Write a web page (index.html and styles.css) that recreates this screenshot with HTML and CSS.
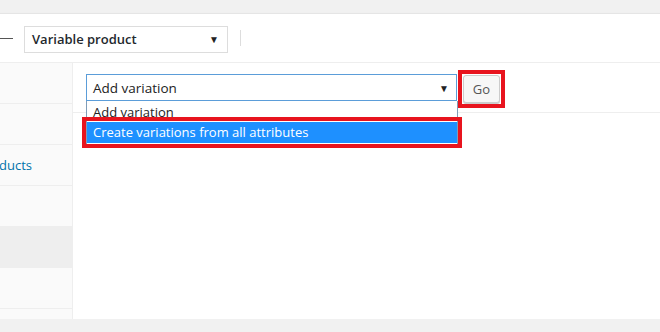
FILE: index.html
```html
<!DOCTYPE html>
<html lang="en">
<head>
  <meta charset="UTF-8" />
  <title>Product data</title>
  <link rel="stylesheet" href="styles.css">
</head>
<body>
  <div class="top-gap"></div>
  <div class="panel">
    <div class="panel-header">
      <span class="dash"></span>
      <div class="type-select">
        <span>Variable product</span>
        <span class="arrow">&#9660;</span>
      </div>
      <span class="sep"></span>
    </div>
    <div class="panel-body">
      <ul class="tabs">
        <li></li>
        <li></li>
        <li><a href="#">ducts</a></li>
        <li></li>
        <li class="active"></li>
        <li></li>
        <li></li>
      </ul>
      <div class="main">
        <div class="toolbar">
          <div class="var-select">
            <div class="select-box">
              <span>Add variation</span>
              <span class="arrow">&#9660;</span>
            </div>
            <ul class="options">
              <li>Add variation</li>
              <li class="selected">Create variations from all attributes</li>
            </ul>
          </div>
          <span class="mark">
            <button class="go">Go</button>
          </span>
        </div>
      </div>
    </div>
  </div>
</body>
</html>
```

FILE: styles.css
```css
body {
  margin: 0;
  background: #f1f1f1;
  font-family: "Open Sans", "Noto Sans", sans-serif;
  font-size: 13px;
  color: #32373c;
}
.top-gap {
  height: 13px;
}
.panel {
  background: #fff;
  border-top: 1px solid #e5e5e5;
  height: 305px;
  box-shadow: 0 1px 2px rgba(0,0,0,0.08);
}
.panel-header {
  height: 48px;
  border-bottom: 1px solid #eee;
  display: flex;
  align-items: center;
}
.dash {
  width: 13px;
  height: 1px;
  background: #555;
  margin-right: 11px;
  margin-top: 1px;
}
.type-select {
  width: 187px;
  height: 25px;
  border: 1px solid #ddd;
  display: flex;
  align-items: center;
  justify-content: space-between;
  padding: 0 8px 0 7px;
  font-weight: 600;
  font-size: 13px;
  color: #23282d;
  margin-top: 2px;
}
.arrow {
  font-size: 10px;
  color: #222;
}
.sep {
  width: 1px;
  height: 16px;
  background: #ddd;
  margin-left: 12px;
}
.panel-body {
  display: flex;
  height: 256px;
}
.tabs {
  list-style: none;
  margin: 0;
  padding: 0;
  width: 72px;
  background: #fafafa;
  border-right: 1px solid #eee;
  overflow: hidden;
}
.tabs li {
  height: 40px;
  border-bottom: 1px solid #eee;
  display: flex;
  align-items: center;
}
.tabs li.active {
  background: #eee;
}
.tabs a {
  color: #0073aa;
  text-decoration: none;
  font-size: 13px;
  margin-left: -1px;
}
.main {
  flex: 1;
}
.toolbar {
  height: 49px;
  border-bottom: 1px solid #eee;
  display: flex;
  align-items: center;
  padding-left: 13px;
  gap: 1px;
}
.var-select {
  position: relative;
}
.select-box {
  width: 356px;
  height: 25px;
  border: 1px solid #5b9dd9;
  display: flex;
  align-items: center;
  justify-content: space-between;
  padding: 0 7px 0 6px;
  color: #222;
  font-size: 13.5px;
  background: #fff;
}
.options {
  position: absolute;
  left: 0;
  top: 27px;
  width: 370px;
  margin: 0;
  padding: 0;
  list-style: none;
  background: #fff;
  border: 1px solid #7f9db9;
  border-top: none;
  font-size: 13px;
  color: #222;
}
.options li {
  height: 21px;
  line-height: 22px;
  padding-left: 6px;
}
.options li.selected {
  background: #1e90ff;
  color: #fff;
  line-height: 20px;
  margin-bottom: 1px;
  outline: 4px solid #e8141e;
  outline-offset: 1px;
}
.mark {
  border: 4px solid #e8141e;
  padding: 1px;
  display: flex;
  margin-top: 2px;
}
.go {
  height: 28px;
  width: 37px;
  border: 1px solid #ccc;
  border-radius: 3px;
  background: #f7f7f7;
  box-shadow: 0 1px 0 #ccc;
  font-family: inherit;
  font-size: 13px;
  color: #555;
  padding: 0;
}
```
